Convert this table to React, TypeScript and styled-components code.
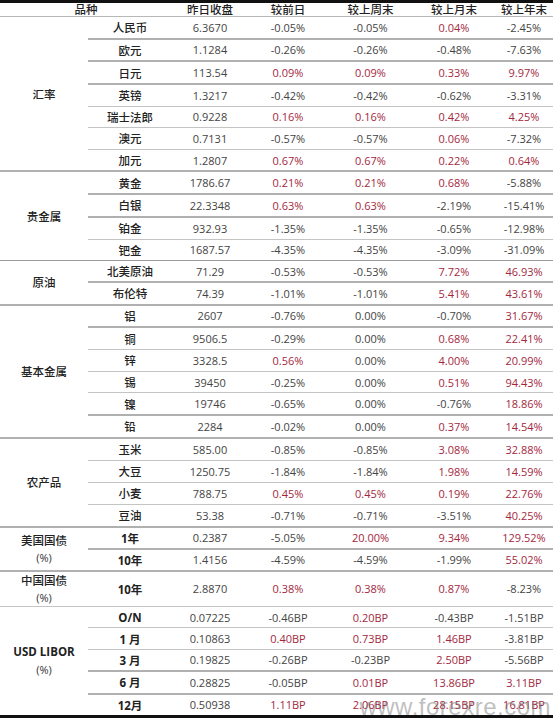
import React from 'react';
import styled, { createGlobalStyle } from 'styled-components';

const GlobalStyle = createGlobalStyle`
  html, body {
    margin: 0;
    padding: 0;
    background: #ffffff;
  }
  body {
    font-family: "Open Sans", "Noto Sans CJK SC", sans-serif;
    font-size: 11px;
    color: #3d3d3d;
  }
`;

const ROW_H = 22.2;
const COLS = '84px 76px 80px 85px 82px 1fr';

type Line = 'thick' | 'thin' | 'dark' | 'black';

const lineCss = (l: Line) => {
  if (l === 'thick') return '2px solid #b0b0b0';
  if (l === 'dark') return '1px solid #9a9a9a';
  if (l === 'black') return '3px solid #111111';
  return '1px solid #c4c4c4';
};

const Sheet = styled.div`
  position: relative;
  width: 553px;
  overflow: hidden;
`;

const Header = styled.div`
  display: grid;
  grid-template-columns: 172px 76px 80px 85px 82px 1fr;
  height: 17px;
  box-sizing: border-box;
  border-top: 3px solid #111111;
  border-bottom: 1px solid #b8b8b8;
  align-items: center;
`;

const HeadCell = styled.div`
  text-align: center;
  font-family: "Noto Sans CJK SC", sans-serif;
  font-size: 11.5px;
  font-weight: 500;
  color: #222222;
  line-height: 13px;
`;

const Section = styled.div<{ $h: number; $line: Line }>`
  display: grid;
  grid-template-columns: 88px 1fr;
  height: ${(p) => p.$h}px;
  box-sizing: border-box;
  border-bottom: ${(p) => lineCss(p.$line)};
`;

const GroupLabel = styled.div<{ $bold?: boolean }>`
  display: flex;
  flex-direction: column;
  align-items: center;
  justify-content: center;
  gap: 4px;
  font-family: ${(p) => (p.$bold ? '"Open Sans", "Noto Sans CJK SC", sans-serif' : '"Noto Sans CJK SC", sans-serif')};
  font-size: ${(p) => (p.$bold ? '11.5px' : '11.5px')};
  font-weight: ${(p) => (p.$bold ? 700 : 500)};
  color: #222222;
  line-height: 14px;
`;

const Paren = styled.span`
  font-family: "Open Sans", sans-serif;
  font-weight: 400;
  font-size: 11px;
  color: #333333;
`;

const Rows = styled.div`
  display: flex;
  flex-direction: column;
`;

const Row = styled.div<{ $line?: Line }>`
  flex: 1;
  display: grid;
  grid-template-columns: ${COLS};
  align-items: center;
  box-sizing: border-box;
  border-bottom: ${(p) => (p.$line ? lineCss(p.$line) : 'none')};
`;

const Name = styled.div<{ $bold?: boolean }>`
  text-align: center;
  font-family: ${(p) => (p.$bold ? '"Open Sans", "Noto Sans CJK SC", sans-serif' : '"Noto Sans CJK SC", sans-serif')};
  font-size: 11.5px;
  font-weight: ${(p) => (p.$bold ? 700 : 500)};
  color: #222222;
`;

const Num = styled.div<{ $up?: boolean }>`
  text-align: center;
  font-family: "Open Sans", sans-serif;
  font-size: 11px;
  color: ${(p) => (p.$up ? '#a3283e' : '#444444')};
  white-space: nowrap;
`;

const Watermark = styled.div`
  position: absolute;
  right: 2px;
  bottom: -3px;
  font-family: "Liberation Sans", Arial, sans-serif;
  font-size: 24px;
  letter-spacing: 0.5px;
  color: rgba(110, 110, 110, 0.45);
  pointer-events: none;
`;

type Item = { name: string; close: string; vals: string[]; line?: Line; bold?: boolean };
type Group = { label: string; sub?: string; bold?: boolean; line: Line; h?: number; items: Item[] };

const groups: Group[] = [
  {
    label: '汇率',
    line: 'thick',
    items: [
      { name: '人民币', close: '6.3670', vals: ['-0.05%', '-0.05%', '0.04%', '-2.45%'], line: 'thick' },
      { name: '欧元', close: '1.1284', vals: ['-0.26%', '-0.26%', '-0.48%', '-7.63%'], line: 'thick' },
      { name: '日元', close: '113.54', vals: ['0.09%', '0.09%', '0.33%', '9.97%'], line: 'thick' },
      { name: '英镑', close: '1.3217', vals: ['-0.42%', '-0.42%', '-0.62%', '-3.31%'], line: 'thin' },
      { name: '瑞士法郎', close: '0.9228', vals: ['0.16%', '0.16%', '0.42%', '4.25%'], line: 'thin' },
      { name: '澳元', close: '0.7131', vals: ['-0.57%', '-0.57%', '0.06%', '-7.32%'], line: 'thin' },
      { name: '加元', close: '1.2807', vals: ['0.67%', '0.67%', '0.22%', '0.64%'] },
    ],
  },
  {
    label: '贵金属',
    line: 'dark',
    items: [
      { name: '黄金', close: '1786.67', vals: ['0.21%', '0.21%', '0.68%', '-5.88%'], line: 'thick' },
      { name: '白银', close: '22.3348', vals: ['0.63%', '0.63%', '-2.19%', '-15.41%'], line: 'thick' },
      { name: '铂金', close: '932.93', vals: ['-1.35%', '-1.35%', '-0.65%', '-12.98%'], line: 'thin' },
      { name: '钯金', close: '1687.57', vals: ['-4.35%', '-4.35%', '-3.09%', '-31.09%'] },
    ],
  },
  {
    label: '原油',
    line: 'thick',
    items: [
      { name: '北美原油', close: '71.29', vals: ['-0.53%', '-0.53%', '7.72%', '46.93%'], line: 'thick' },
      { name: '布伦特', close: '74.39', vals: ['-1.01%', '-1.01%', '5.41%', '43.61%'] },
    ],
  },
  {
    label: '基本金属',
    line: 'thick',
    items: [
      { name: '铝', close: '2607', vals: ['-0.76%', '0.00%', '-0.70%', '31.67%'], line: 'thick' },
      { name: '铜', close: '9506.5', vals: ['-0.29%', '0.00%', '0.68%', '22.41%'], line: 'thin' },
      { name: '锌', close: '3328.5', vals: ['0.56%', '0.00%', '4.00%', '20.99%'], line: 'thin' },
      { name: '锡', close: '39450', vals: ['-0.25%', '0.00%', '0.51%', '94.43%'], line: 'thin' },
      { name: '镍', close: '19746', vals: ['-0.65%', '0.00%', '-0.76%', '18.86%'], line: 'thick' },
      { name: '铅', close: '2284', vals: ['-0.02%', '0.00%', '0.37%', '14.54%'] },
    ],
  },
  {
    label: '农产品',
    line: 'thick',
    items: [
      { name: '玉米', close: '585.00', vals: ['-0.85%', '-0.85%', '3.08%', '32.88%'], line: 'thin' },
      { name: '大豆', close: '1250.75', vals: ['-1.84%', '-1.84%', '1.98%', '14.59%'], line: 'thin' },
      { name: '小麦', close: '788.75', vals: ['0.45%', '0.45%', '0.19%', '22.76%'], line: 'thin' },
      { name: '豆油', close: '53.38', vals: ['-0.71%', '-0.71%', '-3.51%', '40.25%'] },
    ],
  },
  {
    label: '美国国债',
    sub: '(%)',
    line: 'thick',
    items: [
      { name: '1年', close: '0.2387', vals: ['-5.05%', '20.00%', '9.34%', '129.52%'], line: 'thick', bold: true },
      { name: '10年', close: '1.4156', vals: ['-4.59%', '-4.59%', '-1.99%', '55.02%'], bold: true },
    ],
  },
  {
    label: '中国国债',
    sub: '(%)',
    line: 'thin',
    h: 35,
    items: [{ name: '10年', close: '2.8870', vals: ['0.38%', '0.38%', '0.87%', '-8.23%'], bold: true }],
  },
  {
    label: 'USD LIBOR',
    sub: '(%)',
    bold: true,
    line: 'black',
    items: [
      { name: 'O/N', close: '0.07225', vals: ['-0.46BP', '0.20BP', '-0.43BP', '-1.51BP'], line: 'thin', bold: true },
      { name: '1 月', close: '0.10863', vals: ['0.40BP', '0.73BP', '1.46BP', '-3.81BP'], line: 'thin', bold: true },
      { name: '3 月', close: '0.19825', vals: ['-0.26BP', '-0.23BP', '2.50BP', '-5.56BP'], line: 'thick', bold: true },
      { name: '6 月', close: '0.28825', vals: ['-0.05BP', '0.01BP', '13.86BP', '3.11BP'], line: 'thick', bold: true },
      { name: '12月', close: '0.50938', vals: ['1.11BP', '2.06BP', '28.15BP', '16.81BP'], bold: true },
    ],
  },
];

const isUp = (v: string) => !v.startsWith('-') && !v.startsWith('0.00');

const App: React.FC = () => (
  <>
    <GlobalStyle />
    <Sheet>
      <Header>
        <HeadCell>品种</HeadCell>
        <HeadCell>昨日收盘</HeadCell>
        <HeadCell>较前日</HeadCell>
        <HeadCell>较上周末</HeadCell>
        <HeadCell>较上月末</HeadCell>
        <HeadCell>较上年末</HeadCell>
      </Header>
      {groups.map((g) => (
        <Section key={g.label} $h={g.h ?? g.items.length * ROW_H} $line={g.line}>
          <GroupLabel $bold={g.bold}>
            <span>{g.label}</span>
            {g.sub && <Paren>{g.sub}</Paren>}
          </GroupLabel>
          <Rows>
            {g.items.map((it) => (
              <Row key={it.name} $line={it.line}>
                <Name $bold={it.bold}>{it.name}</Name>
                <Num>{it.close}</Num>
                {it.vals.map((v, i) => (
                  <Num key={i} $up={isUp(v)}>
                    {v}
                  </Num>
                ))}
              </Row>
            ))}
          </Rows>
        </Section>
      ))}
      <Watermark>www.forexre.com</Watermark>
    </Sheet>
  </>
);

export default App;
